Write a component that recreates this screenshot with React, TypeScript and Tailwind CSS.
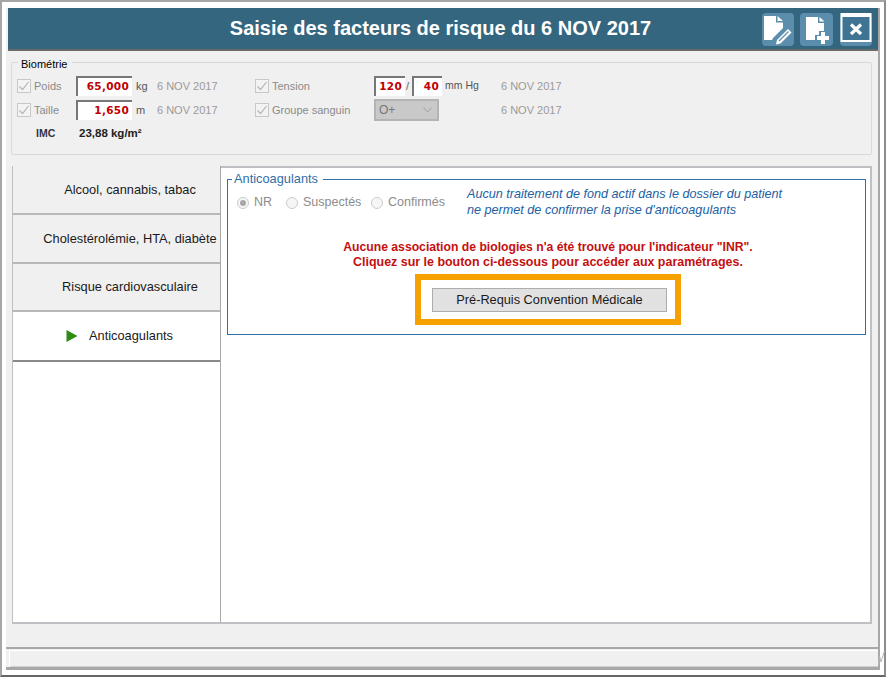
import React from "react";

const FONT = "font-['Liberation_Sans',Arial,sans-serif]";

function Check({ label, w }: { label: string; w: string }) {
  return (
    <div className={`flex items-center ${w}`}>
      <span className="w-[14px] h-[14px] border border-[#c8c8c8] bg-[#f3f3f3] flex items-center justify-center shrink-0">
        <svg width="12" height="12" viewBox="0 0 12 12" fill="none">
          <path d="M1.5 6.5 L4.5 9.5 L10.5 2" stroke="#b4b4b4" strokeWidth="1.2" />
        </svg>
      </span>
      <span className="ml-[3px] text-[#8a8a8a] text-[11px]">{label}</span>
    </div>
  );
}

function Value({ value, w }: { value: string; w: string }) {
  return (
    <div
      className={`${w} h-[20px] bg-white border-l-2 border-t-2 border-[#777777] flex items-center justify-end pr-[3px] font-['DejaVu_Sans',sans-serif] font-bold text-[10.5px] text-[#c00000] tracking-[0.3px]`}
    >
      {value}
    </div>
  );
}

function Radio({ label, checked, w }: { label: string; checked?: boolean; w: string }) {
  return (
    <div className={`flex items-center ${w}`}>
      <span className="w-[12px] h-[12px] rounded-full border border-[#cccccc] bg-[#f6f6f6] flex items-center justify-center shrink-0">
        {checked && <span className="w-[6px] h-[6px] rounded-full bg-[#a8a8a8]" />}
      </span>
      <span className="ml-[5px] text-[#8c8c8c] text-[12.5px]">{label}</span>
    </div>
  );
}

function Tab({ label, h }: { label: string; h: string }) {
  return (
    <div className={`${h} bg-[#f0f0f0] border-b-2 border-[#b8b8b8] flex items-center justify-center pl-[27px] text-[12.8px] text-[#1a1a1a] whitespace-nowrap`}>
      {label}
    </div>
  );
}

export default function App() {
  return (
    <div className={`${FONT} relative w-[886px] h-[677px] bg-white border-t-2 border-l-2 border-r-2 border-b-2 border-t-[#a6a6a6] border-l-[#a6a6a6] border-r-[#8c8c8c] border-b-[#666666] pt-[6px] pl-[4px] pr-[4px]`}>
      <div className="w-[874px] h-[662px] bg-[#f0f0f0] border-r-2 border-b-[3px] border-[#a8a8a8] flex flex-col">
        {/* title bar */}
        <div className="ml-[2px] h-[43px] shrink-0 bg-[#34677f] border-b-2 border-[#6a6a6a] flex items-center relative">
          <div className="flex-1 text-center text-white font-bold text-[20px] pr-[5px] pb-[2px]">
            Saisie des facteurs de risque du 6 NOV 2017
          </div>
          <div className="absolute right-[6px] top-[5px] flex">
            <svg width="32" height="33" viewBox="0 0 32 33">
              <rect width="32" height="33" rx="4" fill="#5b8ead" />
              <path d="M2 3 H14 V9.5 H21 V15 L11 25 L10 27 H2 Z" fill="#fff" />
              <path d="M15.5 3 L21 8 H15.5 Z" fill="#fff" />
              <path d="M15 27 L26 16 L29.5 19.5 L18.5 30.5 L14 31.5 Z" fill="#fff" />
              <path d="M17 28 L26.5 18.5" stroke="#5b8ead" strokeWidth="1.2" />
            </svg>
            <svg width="33" height="33" viewBox="0 0 33 33" className="ml-[6px]">
              <rect width="33" height="33" rx="4" fill="#5b8ead" />
              <path d="M6 4 H18 V10 H24 V18 H19 V22 H15 V27 H6 Z" fill="#fff" />
              <path d="M19.5 4 L24.5 8.5 H19.5 Z" fill="#fff" />
              <path d="M21 19 H25 V23 H29 V27 H25 V31 H21 V27 H17 V23 H21 Z" fill="#fff" />
            </svg>
            <svg width="32" height="33" viewBox="0 0 32 33" className="ml-[7px]">
              <rect width="32" height="33" rx="4" fill="#5b8ead" />
              <path d="M0.5 0 H31.5 V29 H0.5 Z" fill="#fff" />
              <rect x="2.5" y="4" width="27" height="23" fill="#3f7493" />
              <path d="M11 11.5 L21 21 M21 11.5 L11 21" stroke="#fff" strokeWidth="3.2" />
            </svg>
          </div>
        </div>

        {/* biometrie */}
        <fieldset className="ml-[5px] mt-[5px] w-[861px] h-[99px] shrink-0 border border-[#d9d9d9] pl-[5px] rounded-[2px]">
          <legend className="ml-[1px] pl-[3px] pr-[5px] text-[11px] leading-[13px] text-black">
            <span className="relative top-[2px]">Biométrie</span>
          </legend>
          <div className="mt-[7px] flex items-center h-[20px]">
            <Check label="Poids" w="w-[59px]" />
            <Value value="65,000" w="w-[56px]" />
            <span className="ml-[4px] w-[21px] text-[11px] text-[#555555]">kg</span>
            <span className="w-[98px] text-[11px] text-[#9a9a9a]">6 NOV 2017</span>
            <Check label="Tension" w="w-[119px]" />
            <Value value="120" w="w-[31px]" />
            <span className="w-[6px] ml-[1px] text-[11px] text-[#666666]">/</span>
            <Value value="40" w="w-[30px]" />
            <span className="ml-[3px] w-[56px] text-[10.5px] text-[#555555] whitespace-nowrap">mm Hg</span>
            <span className="text-[11px] text-[#9a9a9a]">6 NOV 2017</span>
          </div>
          <div className="mt-[4px] flex items-center h-[20px]">
            <Check label="Taille" w="w-[59px]" />
            <Value value="1,650" w="w-[56px]" />
            <span className="ml-[4px] w-[21px] text-[11px] text-[#555555]">m</span>
            <span className="w-[98px] text-[11px] text-[#9a9a9a]">6 NOV 2017</span>
            <Check label="Groupe sanguin" w="w-[119px]" />
            <div className="w-[65px] h-[22px] bg-[#c9c9c9] border-2 border-[#b4b4b4] flex items-center justify-between pl-[3px] pr-[5px] text-[12px] text-[#777777]">
              O+
              <svg width="9" height="6" viewBox="0 0 9 6" fill="none">
                <path d="M0.5 0.5 L4.5 5 L8.5 0.5" stroke="#a0a0a0" strokeWidth="1" />
              </svg>
            </div>
            <span className="ml-[62px] text-[11px] text-[#9a9a9a]">6 NOV 2017</span>
          </div>
          <div className="mt-[4px] flex items-center h-[20px] font-bold text-[10.5px] text-[#222222]">
            <span className="ml-[19px] w-[43px] text-[#333344]">IMC</span>
            <span className="text-[11.5px]">23,88 kg/m²</span>
          </div>
        </fieldset>

        {/* main box */}
        <div className="ml-[6px] mt-[11px] w-[860px] h-[458px] shrink-0 bg-white border-2 border-l-[1px] border-[#c0c0c4] flex">
          <div className="w-[208px] shrink-0 border-r border-[#a8a8a8] flex flex-col -mt-[2px]">
            <Tab label="Alcool, cannabis, tabac" h="h-[49px]" />
            <Tab label="Cholestérolémie, HTA, diabète" h="h-[49px]" />
            <Tab label="Risque cardiovasculaire" h="h-[48px]" />
            <div className="h-[50px] bg-white border-b-2 border-[#8a8a8a] flex items-center text-[12.8px] text-[#1a1a1a]">
              <svg width="12" height="14" viewBox="0 0 12 14" className="ml-[53px]">
                <path d="M0.5 1 L11.5 7 L0.5 13 Z" fill="#2e8b12" />
              </svg>
              <span className="ml-[11px]">Anticoagulants</span>
            </div>
          </div>
          <div className="flex-1 pl-[6px] pr-[4px]">
            <fieldset className="w-[639px] h-[163px] mt-[4px] border border-[#2f6ea8] pl-[9px]">
              <legend className="-ml-[5px] pl-[2px] pr-[5px] text-[12.8px] leading-[14px] text-[#2f6ea8]">Anticoagulants</legend>
              <div className="flex items-start">
                <div className="flex items-center h-[17px] mt-[8px] w-[230px]">
                  <Radio label="NR" checked w="w-[49px]" />
                  <Radio label="Suspectés" w="w-[85px]" />
                  <Radio label="Confirmés" w="w-[84px]" />
                </div>
                <div className="text-[12.64px] leading-[16px] italic text-[#2161a3] whitespace-nowrap">
                  Aucun traitement de fond actif dans le dossier du patient
                  <br />
                  ne permet de confirmer la prise d'anticoagulants
                </div>
              </div>
              <div className="mt-[22px] -ml-[6px] text-center font-bold text-[12.2px] leading-[15px] text-[#c40f0f]">
                Aucune association de biologies n'a été trouvé pour l'indicateur "INR".
                <br />
                <span className="text-[12.45px]">Cliquez sur le bouton ci-dessous pour accéder aux paramétrages.</span>
              </div>
              <div className="mt-[4px] ml-[178px] w-[266px] h-[51px] border-[6px] border-[#f7a100] flex items-center justify-center pl-[3px]">
                <div className="w-[235px] h-[24px] bg-[#e1e1e1] border border-[#adadad] flex items-center justify-center text-[12.75px] text-[#1a1a1a]">
                  Pré-Requis Convention Médicale
                </div>
              </div>
            </fieldset>
          </div>
        </div>

        {/* status bar */}
        <div className="mt-[23px] h-[2px] shrink-0 bg-[#a8a8a8]" />
        <div className="ml-[3px] mt-[1px] flex-1 border-l border-t border-white bg-[#f0f0f0] shadow-[inset_0_-1px_0_#d0d0d0]" />
      </div>
      {/* resize grip */}
      <svg width="8" height="16" viewBox="0 0 8 16" fill="none" className="absolute left-[876px] top-[648px]">
        <path d="M0.5 15 L1.5 6 L3 12 L6.5 1" stroke="#b8b8b8" strokeWidth="1" />
      </svg>
    </div>
  );
}
